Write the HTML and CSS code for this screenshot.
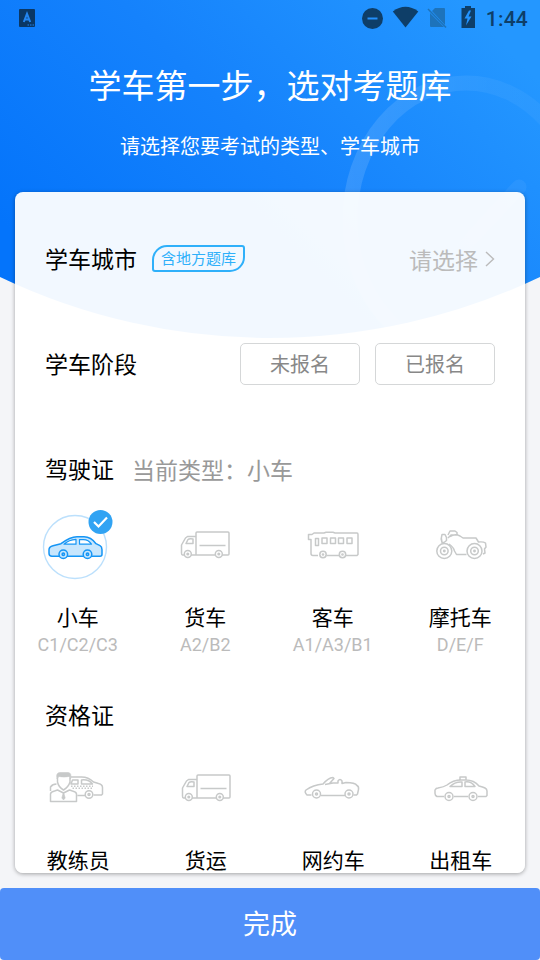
FILE: index.html
```html
<!DOCTYPE html>
<html lang="zh-CN">
<head>
<meta charset="utf-8">
<title>选择题库</title>
<link rel="stylesheet" href="styles.css">
</head>
<body>
<svg class="backdrop" width="540" height="340" viewBox="0 0 540 340">
  <defs>
    <linearGradient id="sky" gradientUnits="userSpaceOnUse" x1="60" y1="280" x2="400" y2="-60"><stop offset="0" stop-color="#0474fb"/><stop offset=".5" stop-color="#1582fc"/><stop offset="1" stop-color="#2497ff"/></linearGradient>
    <linearGradient id="halo" x1="0" y1="0" x2="1" y2="0"><stop offset="0" stop-color="#fff" stop-opacity=".13"/><stop offset=".6" stop-color="#fff" stop-opacity=".05"/><stop offset="1" stop-color="#fff" stop-opacity=".03"/></linearGradient>
    <clipPath id="dome"><path d="M0 0H540V277A628 628 0 0 1 0 277Z"/></clipPath>
  </defs>
  <g clip-path="url(#dome)">
    <path fill="url(#sky)" d="M0 0H540V340H0Z"/>
    <ellipse cx="466" cy="219" rx="116" ry="136" fill="none" stroke="url(#halo)" stroke-width="15"/>
    <path d="M417 226l38 30 64-69" fill="none" stroke="#fff" stroke-opacity=".05" stroke-width="15" stroke-linecap="round"/>
  </g>
</svg>
<div class="screen">
  <header class="status">
    <svg width="16" height="18" viewBox="0 0 16 18"><rect width="16" height="18" rx="1" fill="#0a3765"/><path d="M4.800 13L8 4.800 11.200 13M6 10.500h4" fill="none" stroke="#2385f0" stroke-width="2"/><path d="M8.500 16h6.500" stroke="#2385f0" stroke-dasharray="1.500 1"/></svg>
    <div class="status-right">
      <svg width="124" height="24" viewBox="0 0 124 24">
        <g fill="#0e3e68"><circle cx="10.500" cy="12.500" r="10.500"/><path d="M30.800 5.500Q43.500-3.800 56.300 5.500L43.500 21.500Z"/><path d="M99.500 2h3.500V0h6v2h4v20H99.500Z"/></g>
        <path d="M5.500 12.500h10" stroke="#238ffb" stroke-width="2"/>
        <path d="M73 2h9q1 0 1 1v16L70 5ZM68 7l14 14H69q-1 0-1-1Z" fill="#1d73bb"/>
        <path d="M66 3l18 18.500" stroke="#1d73bb" stroke-width="1.500"/>
        <path d="M107 4.500l-4.500 8h3l-1.500 7 5.500-9h-3l2.500-6Z" fill="#2394ff"/>
      </svg>
      <span class="clock">1:44</span>
    </div>
  </header>
  <h1 class="title">学车第一步，选对考题库</h1>
  <p class="subtitle">请选择您要考试的类型、学车城市</p>

  <main class="card">
    <section class="row city">
      <h2>学车城市</h2><span class="tag">含地方题库</span>
      <span class="pick">请选择</span>
      <svg class="chevron" width="10" height="16" viewBox="0 0 10 16"><path d="M1 1l7.500 7L1 15" fill="none" stroke="#bbb" stroke-width="1.400"/></svg>
    </section>
    <section class="row stage">
      <h2>学车阶段</h2>
      <div class="choices"><button>未报名</button><button>已报名</button></div>
    </section>
    <section class="row licence"><h2>驾驶证</h2><span class="current">当前类型：小车</span></section>
    <div class="grid">
      <div class="item">
        <svg class="icon" width="80" height="76" viewBox="0 0 80 76">
          <circle cx="37" cy="39" r="31.500" fill="#fff" stroke="#bce0fc" stroke-width="1.400"/>
          <g fill="#c7e6fd" stroke="#1595f5" stroke-width="1.500" stroke-linejoin="round" transform="translate(0 .7)">
            <path d="M14 47.500q-3 0-3-3V41q0-3 4-4l8-2q9-7 16-7h7q7 0 12 7l4 2q2 1 2 4v4.500q0 2-2 2Z"/>
            <path d="M26 35.500q5-4.500 12-4.800v4.800ZM41.500 31h4q5 0 8 4.500h-12Z" fill="#fff" stroke-width="1.200"/>
            <circle cx="25.300" cy="45.500" r="4.300"/><circle cx="49.500" cy="45.500" r="4.300"/>
            <circle cx="25.300" cy="45.500" r="1.200"/><circle cx="49.500" cy="45.500" r="1.200"/>
          </g>
          <circle cx="62.500" cy="14" r="12" fill="#31a3f3"/><path d="M56 14l4.500 4.500L69 9.500" fill="none" stroke="#fff" stroke-width="2.200"/>
        </svg>
        <b>小车</b><small>C1/C2/C3</small>
      </div>
      <div class="item">
        <svg class="icon line" width="80" height="76" viewBox="0 0 80 76"><use href="#truck"/></svg>
        <b>货车</b><small>A2/B2</small>
      </div>
      <div class="item">
        <svg class="icon line" width="80" height="76" viewBox="0 0 80 76">
          <path d="M25 47.500h-5q-2 0-2-2V31.500h-2.500v-5h3.500l2-1.500h10l2-.7h7l2 .7H64q1 0 1 1.500V46.500l-1 1H53M46 47.500H33.500M22.500 30.500h3v7h-3ZM29 30h5v5.500h-5ZM37.500 30h5v5.500h-5ZM45.500 30h5v5.500h-5ZM54 30h5v5.500h-5Z"/>
          <circle cx="30" cy="46.500" r="3.200"/><circle cx="49.500" cy="46.500" r="3.200"/><circle cx="30" cy="46.500" r=".6"/><circle cx="49.500" cy="46.500" r=".6"/>
        </svg>
        <b>客车</b><small>A1/A3/B1</small>
      </div>
      <div class="item">
        <svg class="icon line" width="80" height="76" viewBox="0 0 80 76">
          <circle cx="24.300" cy="43" r="7.500"/><circle cx="54.500" cy="43" r="7.500"/><circle cx="24.300" cy="43" r="3.800"/><circle cx="54.500" cy="43" r="3.800"/><circle cx="24.300" cy="43" r=".7"/><circle cx="54.500" cy="43" r=".7"/>
          <path d="M22 34.500q-1.500-4 0-8h3l1.500 3v3l-2.500 2ZM28 27l2-4h5l2 1.500v2.500h-6l-3 3M30 28.500q5-3 10-.5l3 2h13l2.500 4q5-.5 7 1l.5 4-1.500 2 .5 4-2 1M29 36q4.500 3 5.500 7l2 3.500h10"/>
        </svg>
        <b>摩托车</b><small>D/E/F</small>
      </div>
    </div>
    <section class="row cert"><h2>资格证</h2></section>
    <div class="grid">
      <div class="item">
        <svg class="icon line" width="80" height="76" viewBox="0 0 80 76">
          <path d="M19.500 25v4q1 5 6 8 5-3 6.500-8v-4M12.500 48.500V41q0-2 4-3l3-1 6 3 6-3 3 1q4 1 4 3v7.500ZM12.500 38v-4q2-3 6-3M32.500 24h11q7 0 12 5l5 1.500q4 1 4 4v6.500l-1 1h-8M39.500 42.500h8M33 31l1.500-4H40v4ZM43.500 27q7-1 11 4h-11Z"/>
          <path d="M19 26q-1.500-6.500 3-6.500h8q4 0 2.500 6.500l-1.500-2.500q-5 1-10 0ZM25.500 39l1.700 6-1.700 2-1.700-2Z" fill="#c7c9c9" stroke-width=".6"/>
          <path d="M33 33.300h22M34.500 35.200h20" stroke-width="1.500" stroke-dasharray="1.500 1.500"/>
          <circle cx="51" cy="41.500" r="3.800"/><circle cx="51" cy="41.500" r="1"/>
        </svg>
        <b>教练员</b>
      </div>
      <div class="item">
        <svg class="icon line" width="80" height="76" viewBox="0 0 80 76"><use href="#truck" y="-2"/></svg>
        <b>货运</b>
      </div>
      <div class="item">
        <svg class="icon line" width="80" height="76" viewBox="0 0 80 76">
          <path d="M18.500 42H14q-3-3-1-5 7-5 17-6 5-6 10-6.500l1 1-5 5.500M32 31.500l8-1.500h5v-2q2-3 4 0v2.500l4-1q9 0 11 3 2 1 1.500 4l-1 4.500-1 1h-3M28 42.500h24"/>
          <circle cx="23.500" cy="41" r="4"/><circle cx="56" cy="41" r="4"/><circle cx="23.500" cy="41" r="1"/><circle cx="56" cy="41" r="1"/>
        </svg>
        <b>网约车</b>
      </div>
      <div class="item">
        <svg class="icon line" width="80" height="76" viewBox="0 0 80 76">
          <path d="M23 43.500h-7q-2-1-2-3V37q1-2 3-2 6-1 9-3 6-5 14-5h5q8 0 13 6 4 1 6 2 2 1 2 3v4.500l-1 1h-8M33 43.500h14M39 26.500v-2.500h6v2.500M29 33.500q5-5 12-4.500v4.500ZM44 29q6-1 10 4.500H44Z"/>
          <circle cx="28" cy="43.500" r="4"/><circle cx="52" cy="43.500" r="4"/><circle cx="28" cy="43.500" r="1"/><circle cx="52" cy="43.500" r="1"/>
        </svg>
        <b>出租车</b>
      </div>
    </div>
  </main>
  <button class="done">完成</button>
</div>
<svg width="0" height="0" class="defs"><defs><g id="truck">
  <path d="M19 47h-1.500q-1 0-1-2v-8l4-7 2-1.500h8M31 47h-5M31 47V25q0-1 1-1h31q1 0 1 1v21q0 1-1 1h-6M50 47H31M34.500 37.500h26M21 35.500l2-4q1-1 5-.5v4.500Z"/>
  <circle cx="22.800" cy="46" r="3.500"/><circle cx="53.800" cy="46" r="3.500"/><circle cx="22.800" cy="46" r=".8"/><circle cx="53.800" cy="46" r=".8"/>
</g></defs></svg>
</body>
</html>
```
FILE: styles.css
```css
* { box-sizing: border-box; }
body {
  margin: 0;
  width: 540px;
  height: 960px;
  overflow: hidden;
  background: #f4f5f8;
  font-family: Roboto, "Noto Sans CJK SC", sans-serif;
  color: #000;
}
h1, h2, p { margin: 0; font-weight: 400; }
svg { display: block; flex: none; }
.backdrop { position: absolute; top: 0; left: 0; }
.defs { position: absolute; }
.screen { position: relative; height: 960px; display: flex; flex-direction: column; }
.status { display: flex; justify-content: space-between; align-items: center; height: 36px; padding: 0 12px 0 19px; }
.status-right { display: flex; align-items: center; }
.clock { padding-top: 1px; font-size: 21px; line-height: 24px; font-weight: 500; color: #0e3e68; letter-spacing: .2px; }
.title { height: 50px; margin-top: 26px; line-height: 50px; font-size: 33px; text-align: center; color: #fff; }
.subtitle { height: 30px; margin-top: 20px; line-height: 30px; font-size: 20px; text-align: center; color: #fff; }
.card {
  height: 681px;
  margin: 30px 15px 15px;
  overflow: hidden;
  border-radius: 8px;
  background: rgba(255, 255, 255, .95);
  box-shadow: 0 1px 4px rgba(0, 0, 0, .35);
}
.row { display: flex; align-items: center; height: 42px; padding: 0 30px; }
.row h2 { padding-top: 4px; font-size: 23px; line-height: 34px; }
.city { margin-top: 46px; }
.tag {
  height: 27px;
  margin: 0 0 1px 15px;
  padding: 0 7px;
  border: 2px solid #2fb0fa;
  border-radius: 15px 3px 15px 3px;
  line-height: 24px;
  font-size: 15px;
  color: #2fb0fa;
}
.pick { margin-left: auto; padding-bottom: 1px; font-size: 23px; color: #bbb; }
.chevron { margin-left: 7px; }
.stage { margin-top: 63px; }
.choices { display: flex; gap: 15px; margin-left: auto; }
.choices button {
  width: 120px;
  height: 42px;
  padding: 2px 0 0;
  border: 1px solid #d5d7d8;
  border-radius: 5px;
  background: #fff;
  font: 20px/30px Roboto, "Noto Sans CJK SC", sans-serif;
  color: #888;
}
.licence { margin-top: 63px; }
.current { margin-left: 18px; padding-bottom: 1px; font-size: 23px; color: #999; }
.grid { display: grid; grid-template-columns: repeat(4, 1fr); margin: 18px 0 0 -1px; width: 510px; }
.item { display: flex; flex-direction: column; align-items: center; }
.icon { margin-bottom: 19px; }
.line { fill: none; stroke: #c7c9c9; stroke-width: 1.5; stroke-linejoin: round; }
.item b { font-size: 21px; line-height: 30px; font-weight: 400; }
.item small { font-size: 18px; line-height: 24px; color: #bbb; }
.cert { margin-top: 37px; }
.cert + .grid { margin: 17px 0 0 -.5px; }
.cert + .grid .icon { margin-bottom: 17px; }
.done {
  flex: none;
  height: 72px;
  padding: 2px 0 0;
  border: 0;
  border-radius: 4px;
  background: #508ff9;
  font: 27px/40px Roboto, "Noto Sans CJK SC", sans-serif;
  color: #fff;
}
```
